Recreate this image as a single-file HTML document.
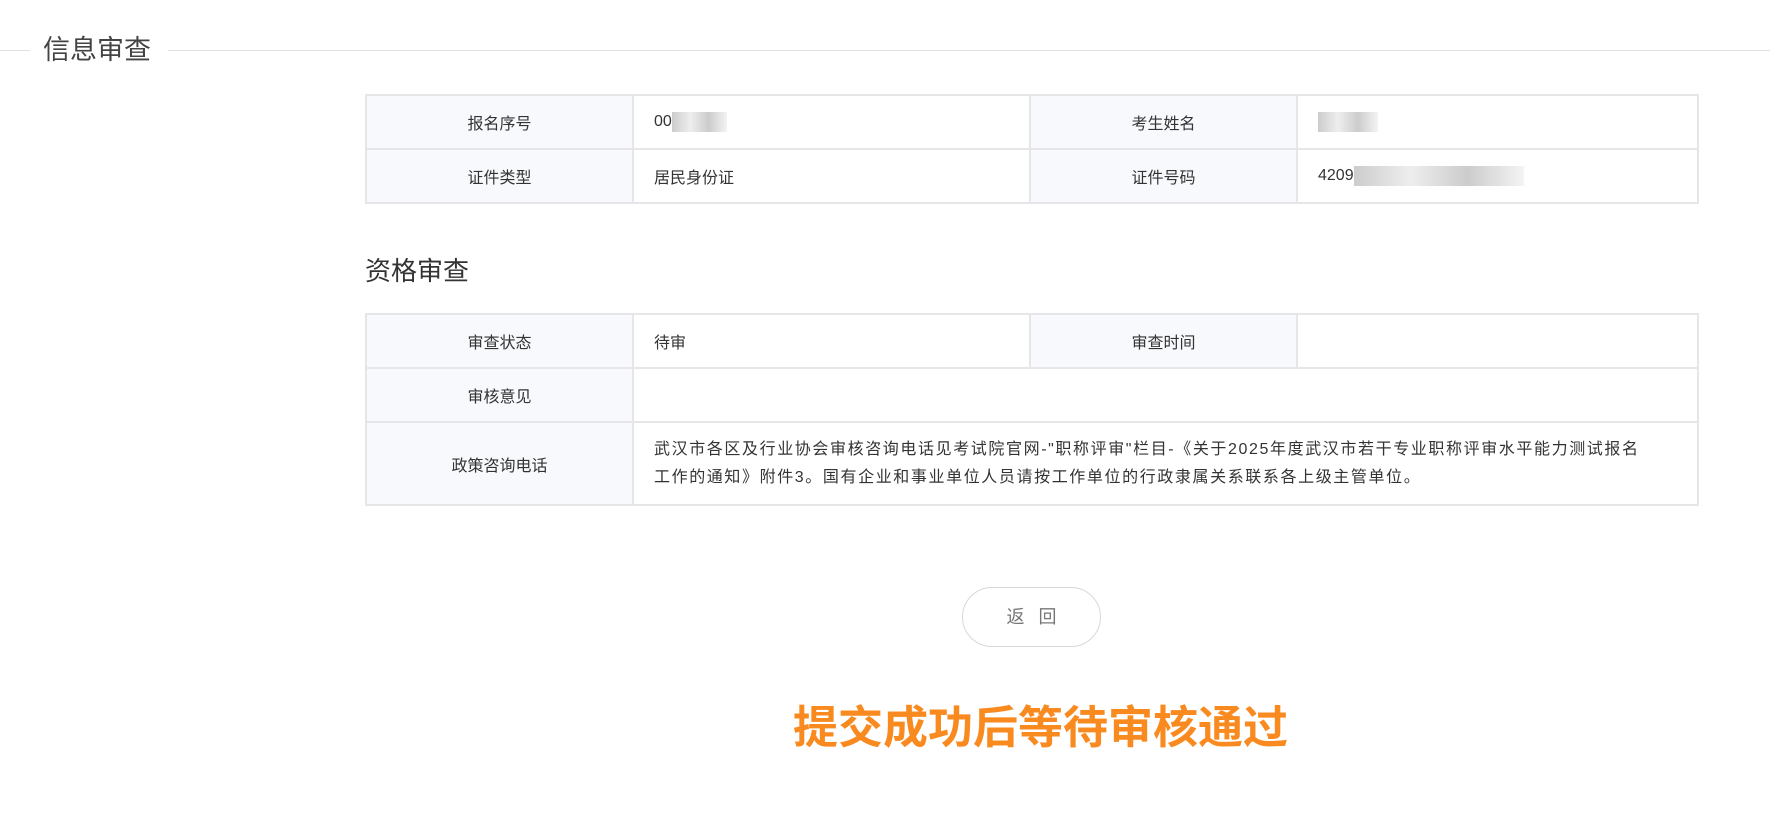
<!DOCTYPE html>
<html><head><meta charset="utf-8"><style>
body{margin:0;width:1770px;height:820px;background:#fff;font-family:"Liberation Sans","Noto Sans CJK SC",sans-serif;color:#333;position:relative;overflow:hidden}
.hl{position:absolute;top:50px;height:1px;background:#e0e0e0}
.title{position:absolute;left:43px;top:33px;font-size:27px;color:#444;line-height:34px}
table{position:absolute;left:365px;width:1334px;border-collapse:collapse;font-size:16px}
td{border:2px solid #e6e6e8;padding:0 20px;color:#333}
td.l{background:#f8f9fc;text-align:center;width:225px}
.h2{position:absolute;left:365px;top:251px;font-size:26px;color:#333}
.btn{position:absolute;left:962px;top:587px;width:137px;height:58px;border:1.5px solid #d8d8d8;border-radius:30px;text-align:center;line-height:58px;font-size:18px;color:#777;letter-spacing:14px;text-indent:14px}
.big{position:absolute;left:793px;top:691px;font-size:45px;font-weight:bold;color:#f98a1f;letter-spacing:0}
.blur{display:inline-block;height:20px;vertical-align:middle;background:linear-gradient(90deg,#ccc,#eee,#ccc,#f4f4f4)}
</style></head><body>
<div class="hl" style="left:0;width:30px"></div>
<div class="hl" style="left:168px;right:0"></div>
<div class="title">信息审查</div>
<table style="top:94px">
<tr style="height:54px"><td class="l">报名序号</td><td style="width:355px">00<span class="blur" style="width:55px"></span></td><td class="l">考生姓名</td><td><span class="blur" style="width:60px"></span></td></tr>
<tr style="height:54px"><td class="l">证件类型</td><td>居民身份证</td><td class="l">证件号码</td><td>4209<span class="blur" style="width:170px"></span></td></tr>
</table>
<div class="h2">资格审查</div>
<table style="top:313px">
<tr style="height:54px"><td class="l">审查状态</td><td style="width:355px">待审</td><td class="l">审查时间</td><td></td></tr>
<tr style="height:54px"><td class="l">审核意见</td><td colspan="3"></td></tr>
<tr style="height:83px"><td class="l">政策咨询电话</td><td colspan="3" style="line-height:28px;font-size:16px;letter-spacing:1.6px;white-space:nowrap">武汉市各区及行业协会审核咨询电话见考试院官网-"职称评审"栏目-《关于2025年度武汉市若干专业职称评审水平能力测试报名<br>工作的通知》附件3。国有企业和事业单位人员请按工作单位的行政隶属关系联系各上级主管单位。</td></tr>
</table>
<div class="btn">返回</div>
<div class="big">提交成功后等待审核通过</div>
</body></html>
